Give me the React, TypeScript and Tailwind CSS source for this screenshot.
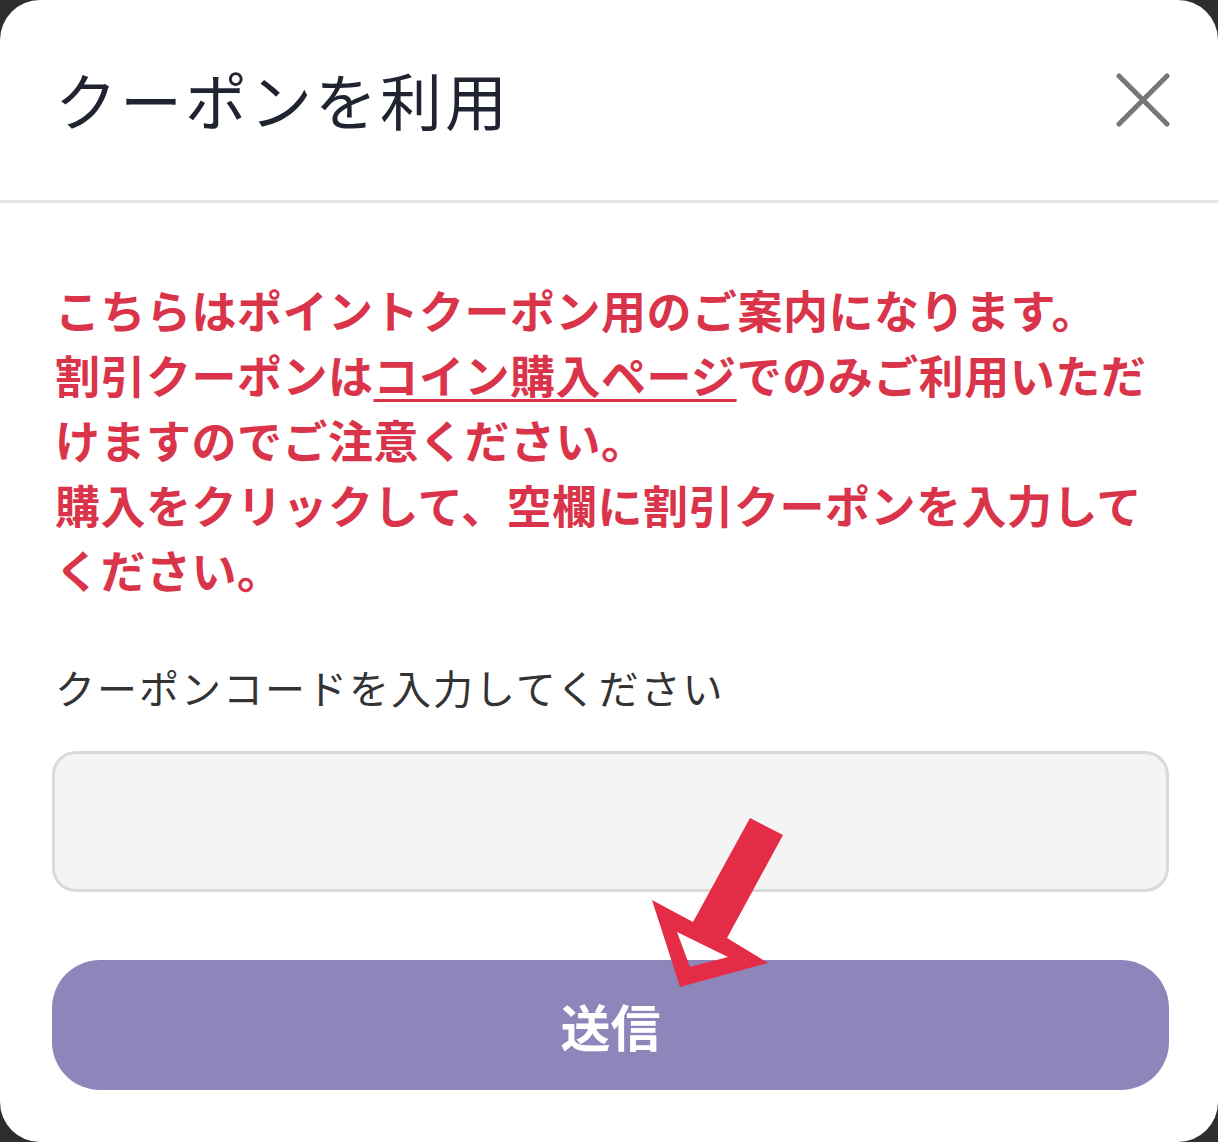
import { useState } from "react";

export default function App() {
  const [code, setCode] = useState("");

  return (
    <div
      className="w-[1218px] h-[1142px] bg-[#2e2e2e]"
      style={{ fontFamily: '"Noto Sans CJK JP", "Noto Sans", sans-serif' }}
    >
      <div className="relative w-full h-full bg-white rounded-[40px] overflow-hidden flex flex-col">
        {/* Header */}
        <div className="h-[203px] shrink-0 flex items-center justify-between pl-[55px] pr-[46px] border-b-[3px] border-[#e3e3e8]">
          <h2 className="text-[62px] leading-none text-[#1f2430] tracking-[3px] font-normal -mt-[2px]">
            クーポンを利用
          </h2>
          <button className="w-[58px] h-[58px] flex items-center justify-center text-[#767676]">
            <svg width="54" height="54" viewBox="0 0 54 54" fill="none">
              <path
                d="M3 3L51 51M51 3L3 51"
                stroke="currentColor"
                strokeWidth="5"
                strokeLinecap="round"
              />
            </svg>
          </button>
        </div>

        {/* Body */}
        <div className="flex flex-col pl-[52px] pr-[49px] pt-[74px]">
          <p className="ml-[3px] w-[1120px] text-[45px] leading-[65px] font-bold text-[#d9344a] tracking-[0.5px]">
            こちらはポイントクーポン用のご案内になります。
            <br />
            割引クーポンは
            <a className="underline decoration-[3px] underline-offset-[5px]">
              コイン購入ページ
            </a>
            でのみご利用いただけますのでご注意ください。
            <br />
            購入をクリックして、空欄に割引クーポンを入力してください。
          </p>

          <label className="ml-[3px] mt-[55px] text-[40px] leading-[60px] text-[#333] tracking-[2px]">
            クーポンコードを入力してください
          </label>

          <input
            value={code}
            onChange={(e) => setCode(e.target.value)}
            className="mt-[34px] h-[141px] w-full rounded-[24px] border-[3px] border-[#d9d9d9] bg-[#f4f4f4] px-6 text-[40px] outline-none"
          />

          <button className="mt-[68px] h-[130px] w-full rounded-[48px] bg-[#8e85bb] text-white text-[50px] font-bold">
            送信
          </button>
        </div>

        {/* Annotation arrow */}
        <svg
          className="absolute left-0 top-0 pointer-events-none"
          width="1218"
          height="1142"
          viewBox="0 0 1218 1142"
        >
          <path
            fillRule="evenodd"
            fill="#e52c46"
            d="M750 818L783 835L727 938L768 963L680 987L652 900L693 922Z M677 932L690 967L728 957Z"
          />
        </svg>
      </div>
    </div>
  );
}
